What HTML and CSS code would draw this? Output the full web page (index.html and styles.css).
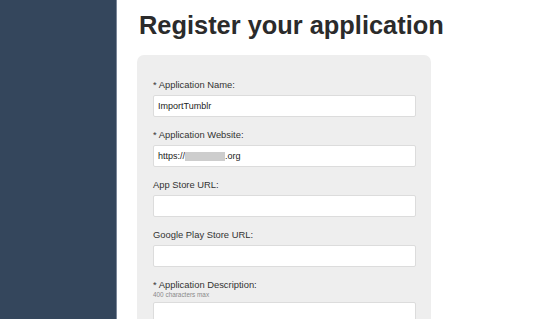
FILE: index.html
```html
<!DOCTYPE html>
<html>
<head>
<meta charset="utf-8">
<link rel="stylesheet" href="styles.css">
</head>
<body>
<div class="page">
  <aside class="sidebar"></aside>
  <main class="main">
    <h1 class="title">Register your application</h1>
    <form class="panel">
      <div class="field">
        <label class="label">* Application Name:</label>
        <div class="input">ImportTumblr</div>
      </div>
      <div class="field">
        <label class="label">* Application Website:</label>
        <div class="input">https://<span class="blur"></span>.org</div>
      </div>
      <div class="field">
        <label class="label">App Store URL:</label>
        <div class="input"></div>
      </div>
      <div class="field">
        <label class="label">Google Play Store URL:</label>
        <div class="input"></div>
      </div>
      <div class="field">
        <label class="label">* Application Description:</label>
        <div class="hint">400 characters max</div>
        <div class="input tall"></div>
      </div>
    </form>
  </main>
</div>
</body>
</html>
```

FILE: styles.css
```css
html, body {
  margin: 0;
  padding: 0;
  background: #ffffff;
  overflow: hidden;
}
.page {
  display: flex;
  width: 550px;
  height: 319px;
  overflow: hidden;
  font-family: "Liberation Sans", Arial, sans-serif;
}
.sidebar {
  width: 117px;
  flex: 0 0 117px;
  background: #34465c;
  border-right: 1px solid #7b8799;
  box-sizing: border-box;
}
.main {
  flex: 1;
  padding-left: 20px;
}
.title {
  margin: 10px 0 0 2px;
  font-size: 25.4px;
  line-height: 31px;
  font-weight: bold;
  color: #2b2b2b;
}
.panel {
  margin-top: 14px;
  width: 294px;
  box-sizing: border-box;
  background: #eeeeee;
  border-radius: 7px;
  padding: 24px 15px 0 16px;
  height: 300px;
}
.field {
  margin-bottom: 12px;
}
.label {
  display: block;
  font-size: 9.4px;
  line-height: 12px;
  color: #333333;
  margin-bottom: 4px;
}
.hint {
  font-size: 6.4px;
  line-height: 8px;
  color: #8a8a8a;
  margin-top: -4px;
  margin-bottom: 3px;
}
.input {
  height: 22px;
  box-sizing: border-box;
  background: #ffffff;
  border: 1px solid #dcdcdc;
  border-radius: 2px;
  padding: 0 4px;
  font-size: 9px;
  line-height: 20px;
  color: #222222;
  display: flex;
  align-items: center;
}
.input.tall {
  height: 40px;
}
.blur {
  display: inline-block;
  width: 40px;
  height: 9px;
  background: #cdcdcd;
  filter: blur(0.6px);
}
```
